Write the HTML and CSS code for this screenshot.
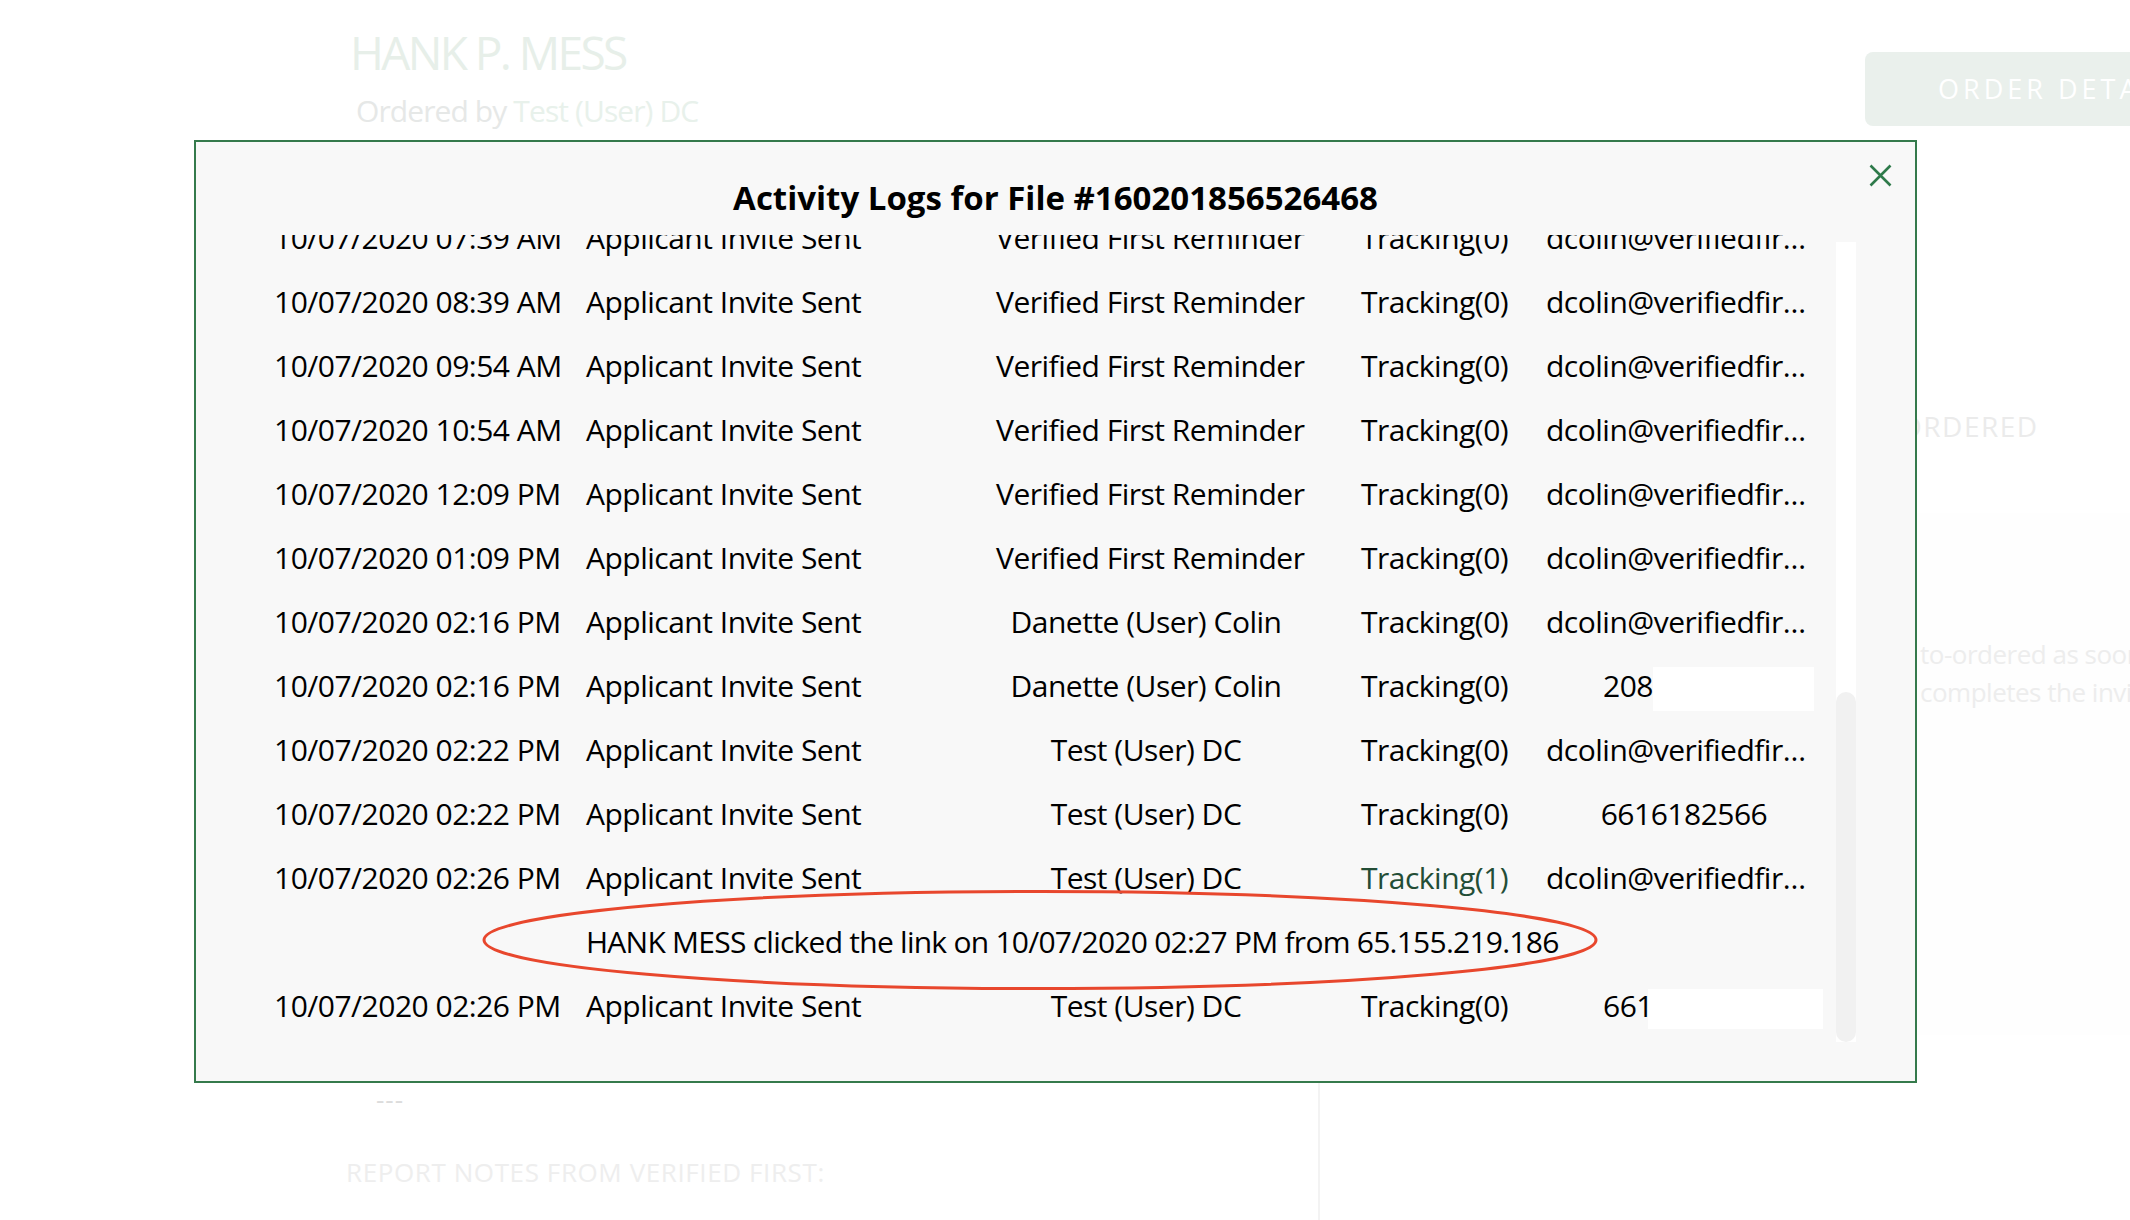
FILE: index.html
```html
<!DOCTYPE html>
<html lang="en">
<head>
    <meta charset="UTF-8">
    <meta name="viewport" content="width=device-width, initial-scale=1.0">
    <title>Activity Logs</title>
    <link rel="stylesheet" href="styles.css">
</head>
<body>
<div id="page">
    <div id="fileHead">
        <div class="who">
            <h1 class="applicant">HANK P. MESS</h1>
            <p class="ordered-by">Ordered by <span class="orderer">Test (User) DC</span></p>
        </div>
        <button class="details-btn">ORDER DETAILS</button>
    </div>
    <div id="fileBody">
        <div class="left-col">
            <div class="dashes">---</div>
            <h3 class="notes-title">REPORT NOTES FROM VERIFIED FIRST:</h3>
        </div>
        <div class="right-col">
            <h3 class="status">ORDERED</h3>
            <div class="status-note">
                <p>to-ordered as soon as the applicant<br>completes the invitation.</p>
            </div>
        </div>
    </div>
</div>

<div id="logsModal">
    <button class="close-btn" aria-label="Close">
        <svg width="23" height="23" viewBox="0 0 23 23">
            <path d="M1.5 1.5 L21.5 21.5 M21.5 1.5 L1.5 21.5" stroke="#2e7a4a" stroke-width="2.6" fill="none"/>
        </svg>
    </button>
    <h2 class="modal-title">Activity Logs for File #160201856526468</h2>
    <div class="log-wrap">
        <div class="log-list">
            <div class="log-rows">
                <div class="log-row">
                    <span class="c-date">10/07/2020 07:39 AM</span>
                    <span class="c-event">Applicant Invite Sent</span>
                    <span class="c-from">Verified First Reminder</span>
                    <span class="c-track">Tracking(0)</span>
                    <span class="c-to">dcolin@verifiedfirst.com</span>
                </div>
                <div class="log-row">
                    <span class="c-date">10/07/2020 08:39 AM</span>
                    <span class="c-event">Applicant Invite Sent</span>
                    <span class="c-from">Verified First Reminder</span>
                    <span class="c-track">Tracking(0)</span>
                    <span class="c-to">dcolin@verifiedfirst.com</span>
                </div>
                <div class="log-row">
                    <span class="c-date">10/07/2020 09:54 AM</span>
                    <span class="c-event">Applicant Invite Sent</span>
                    <span class="c-from">Verified First Reminder</span>
                    <span class="c-track">Tracking(0)</span>
                    <span class="c-to">dcolin@verifiedfirst.com</span>
                </div>
                <div class="log-row">
                    <span class="c-date">10/07/2020 10:54 AM</span>
                    <span class="c-event">Applicant Invite Sent</span>
                    <span class="c-from">Verified First Reminder</span>
                    <span class="c-track">Tracking(0)</span>
                    <span class="c-to">dcolin@verifiedfirst.com</span>
                </div>
                <div class="log-row">
                    <span class="c-date">10/07/2020 12:09 PM</span>
                    <span class="c-event">Applicant Invite Sent</span>
                    <span class="c-from">Verified First Reminder</span>
                    <span class="c-track">Tracking(0)</span>
                    <span class="c-to">dcolin@verifiedfirst.com</span>
                </div>
                <div class="log-row">
                    <span class="c-date">10/07/2020 01:09 PM</span>
                    <span class="c-event">Applicant Invite Sent</span>
                    <span class="c-from">Verified First Reminder</span>
                    <span class="c-track">Tracking(0)</span>
                    <span class="c-to">dcolin@verifiedfirst.com</span>
                </div>
                <div class="log-row">
                    <span class="c-date">10/07/2020 02:16 PM</span>
                    <span class="c-event">Applicant Invite Sent</span>
                    <span class="c-from">Danette (User) Colin</span>
                    <span class="c-track">Tracking(0)</span>
                    <span class="c-to">dcolin@verifiedfirst.com</span>
                </div>
                <div class="log-row">
                    <span class="c-date">10/07/2020 02:16 PM</span>
                    <span class="c-event">Applicant Invite Sent</span>
                    <span class="c-from">Danette (User) Colin</span>
                    <span class="c-track">Tracking(0)</span>
                    <span class="c-to redacted">208<span class="mask mask-a"></span></span>
                </div>
                <div class="log-row">
                    <span class="c-date">10/07/2020 02:22 PM</span>
                    <span class="c-event">Applicant Invite Sent</span>
                    <span class="c-from">Test (User) DC</span>
                    <span class="c-track">Tracking(0)</span>
                    <span class="c-to">dcolin@verifiedfirst.com</span>
                </div>
                <div class="log-row">
                    <span class="c-date">10/07/2020 02:22 PM</span>
                    <span class="c-event">Applicant Invite Sent</span>
                    <span class="c-from">Test (User) DC</span>
                    <span class="c-track">Tracking(0)</span>
                    <span class="c-to phone">6616182566</span>
                </div>
                <div class="log-row">
                    <span class="c-date">10/07/2020 02:26 PM</span>
                    <span class="c-event">Applicant Invite Sent</span>
                    <span class="c-from">Test (User) DC</span>
                    <span class="c-track clicked">Tracking(1)</span>
                    <span class="c-to">dcolin@verifiedfirst.com</span>
                </div>
                <div class="log-row click-note">
                    <span class="c-note">HANK MESS clicked the link on 10/07/2020 02:27 PM from 65.155.219.186</span>
                </div>
                <div class="log-row">
                    <span class="c-date">10/07/2020 02:26 PM</span>
                    <span class="c-event">Applicant Invite Sent</span>
                    <span class="c-from">Test (User) DC</span>
                    <span class="c-track">Tracking(0)</span>
                    <span class="c-to redacted">661<span class="mask mask-b"></span></span>
                </div>
            </div>
        </div>
        <div class="scrollbar"><div class="thumb"></div></div>
    </div>
    <!-- red circle drawn round the click line -->
    <svg class="highlight" width="1120" height="104" viewBox="0 0 1120 104">
        <ellipse cx="560" cy="52" rx="556" ry="48.5" fill="none" stroke="#e8472d" stroke-width="3"/>
    </svg>
</div>
</body>
</html>
```

FILE: styles.css
```css
body {
    font-family: 'Open Sans', 'Noto Sans', sans-serif;
    background-color: #fff;
    margin: 0;
    padding: 0;
    width: 2130px;
    height: 1220px;
    overflow: hidden;
    position: relative;
}

/* faded page behind the modal */
#page {
    padding-left: 346px;
    width: 2200px;
    height: 1220px;
    overflow: hidden;
}

#fileHead {
    display: flex;
    align-items: flex-start;
}

.who {
    flex: 0 0 1519px;
}

.applicant {
    margin: 29px 0 0 4px;
    font-size: 46px;
    line-height: 46px;
    font-weight: 400;
    letter-spacing: -2.6px;
    color: #e7efe9;
}

.ordered-by {
    margin: 21px 0 0 10px;
    font-size: 30px;
    line-height: 30px;
    letter-spacing: -0.9px;
    color: #e6e8e7;
}

.orderer {
    color: #e8f1eb;
}

.details-btn {
    flex: none;
    margin-top: 52px;
    height: 74px;
    padding: 0 73px;
    border: none;
    border-radius: 8px;
    background-color: #eaf0ec;
    color: #fff;
    font-family: 'Open Sans', sans-serif;
    font-size: 27px;
    line-height: 74px;
    letter-spacing: 4px;
}

#fileBody {
    display: grid;
    grid-template-columns: 971px 1px 1fr;
    margin-top: 40px;
    height: 1054px;
}

.left-col {
    padding-top: 922px;
}

.dashes {
    padding-left: 30px;
    font-size: 26px;
    line-height: 22px;
    letter-spacing: 1px;
    color: #dcdcdc;
}

.notes-title {
    margin: 50px 0 0;
    font-size: 26px;
    line-height: 25px;
    font-weight: 400;
    letter-spacing: 0.6px;
    color: #eeeeee;
}

.right-col {
    grid-column: 3;
    border-left: 2px solid #f3f3f3;
    padding-top: 246px;
}

.status {
    margin: 0;
    padding-left: 580px;
    font-size: 28px;
    line-height: 28px;
    font-weight: 400;
    letter-spacing: 1.5px;
    color: #ebebeb;
}

.status-note {
    margin-top: 73px;
    background-color: #fefefe;
    padding: 122px 0 0 600px;
    height: 400px;
}

.status-note p {
    margin: 0;
    font-size: 26px;
    line-height: 38px;
    letter-spacing: -0.5px;
    color: #ededed;
    white-space: nowrap;
}

/* activity log modal */
#logsModal {
    position: absolute;
    left: 194px;
    top: 140px;
    width: 1723px;
    height: 943px;
    box-sizing: border-box;
    padding: 39px 59px 0 0;
    background-color: #f8f8f8;
    border: 2px solid #357a4c;
}

.close-btn {
    position: absolute;
    top: 22px;
    right: 23px;
    width: 23px;
    height: 23px;
    padding: 0;
    border: none;
    background: none;
    cursor: pointer;
}

.close-btn svg {
    display: block;
}

.modal-title {
    margin: 0 0 21px 59px;
    font-size: 33px;
    line-height: 33px;
    font-weight: 700;
    text-align: center;
    color: #000;
}

.log-wrap {
    display: flex;
}

.log-list {
    width: 1640px;
    height: 810px;
    overflow: hidden;
}

.log-rows {
    margin-top: -29px;
}

.log-row {
    display: grid;
    grid-template-columns: 312px 410px 300px 250px 264px;
    padding-left: 78px;
    height: 64px;
    font-size: 30px;
    line-height: 64px;
    letter-spacing: -0.5px;
    color: #000;
    white-space: nowrap;
}

.c-from {
    text-align: center;
}

.c-track {
    padding-left: 65px;
}

.c-track.clicked {
    color: #234d36;
}

.c-to {
    text-align: center;
    overflow: hidden;
    text-overflow: ellipsis;
}

.c-to.phone {
    padding-left: 12px;
}

.c-to.redacted {
    overflow: visible;
    text-align: left;
    padding-left: 57px;
}

.mask {
    display: inline-block;
    vertical-align: middle;
    background-color: #fff;
}

.mask-a {
    width: 161px;
    height: 44px;
}

.mask-b {
    width: 175px;
    height: 40px;
    margin-left: -5px;
}

.c-note {
    grid-column: 2 / -1;
    letter-spacing: -0.75px;
}

.scrollbar {
    width: 20px;
    height: 800px;
    margin-top: 7px;
    background-color: #fff;
    display: flex;
    flex-direction: column;
}

.thumb {
    margin-top: 450px;
    height: 350px;
    border-radius: 10px;
    background-color: #f1f1f1;
}

.highlight {
    position: absolute;
    left: 284px;
    top: 746px;
    pointer-events: none;
}
```
